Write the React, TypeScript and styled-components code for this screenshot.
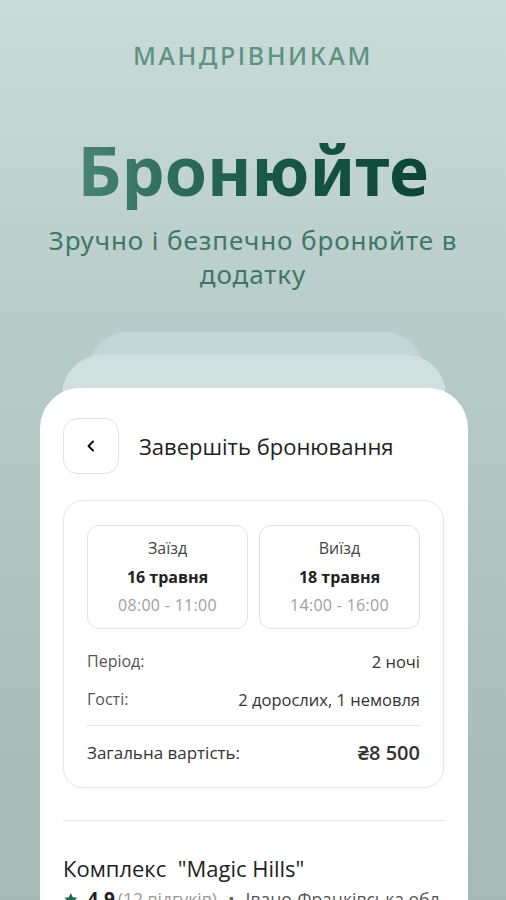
import { createGlobalStyle, styled } from "styled-components";

const Global = createGlobalStyle`
  html, body { margin: 0; padding: 0; }
  body { font-family: "Open Sans", "Noto Sans", sans-serif; }
`;

const Page = styled.div`
  width: 506px;
  height: 900px;
  overflow: hidden;
  background: linear-gradient(180deg, #c9dcd9 0%, #b4c8c6 45%, #a5b9b7 100%);
  display: flex;
  flex-direction: column;
  align-items: center;
`;

const Eyebrow = styled.div`
  margin-top: 38px;
  font-family: "Noto Sans", sans-serif;
  font-size: 25px;
  font-weight: 500;
  letter-spacing: 2.6px;
  color: #5e9383;
  line-height: 34px;
`;

const Heading = styled.h1`
  margin: 58px 0 0;
  font-family: "Noto Sans", sans-serif;
  font-size: 68px;
  font-weight: 700;
  line-height: 80px;
  background: linear-gradient(90deg, #4a8473 0%, #1a5a47 50%, #0c4536 100%);
  -webkit-background-clip: text;
  background-clip: text;
  color: transparent;
`;

const Subtitle = styled.p`
  margin: 13px 0 0;
  width: 440px;
  text-align: center;
  font-family: "Noto Sans", sans-serif;
  font-size: 26px;
  letter-spacing: 0.9px;
  line-height: 34px;
  color: #3f7868;
`;

const Stack = styled.div`
  position: relative;
  margin-top: 97px;
  width: 506px;
  flex: 1;
`;

const Layer = styled.div<{ $top: number; $left: number; $right: number; $bg: string }>`
  position: absolute;
  top: ${(p) => p.$top}px;
  left: ${(p) => p.$left}px;
  right: ${(p) => p.$right}px;
  height: 120px;
  border-radius: 40px;
  background: ${(p) => p.$bg};
`;

const Card = styled.div`
  position: relative;
  margin: 0 38px 0 40px;
  background: #ffffff;
  border-radius: 40px 40px 0 0;
  padding: 30px 24px 0 23px;
  height: 600px;
  color: #222;
`;

const Header = styled.div`
  display: flex;
  align-items: center;
  gap: 20px;
`;

const BackButton = styled.button`
  width: 56px;
  height: 56px;
  border: 1px solid #e2e2e2;
  border-radius: 14px;
  background: #fff;
  display: flex;
  align-items: center;
  justify-content: center;
  padding: 0;
`;

const Title = styled.div`
  font-size: 22px;
  color: #222;
`;

const Panel = styled.div`
  margin-top: 26px;
  border: 1px solid #e6e6e6;
  border-radius: 20px;
  padding: 24px 23px 16px 23px;
  box-shadow: 0 1px 3px rgba(0, 0, 0, 0.04);
`;

const Dates = styled.div`
  display: grid;
  grid-template-columns: 1fr 1fr;
  gap: 11px;
`;

const DateBox = styled.div`
  border: 1px solid #e2e2e2;
  border-radius: 12px;
  height: 104px;
  box-sizing: border-box;
  padding-top: 8px;
  display: flex;
  flex-direction: column;
  align-items: center;
`;

const DateLine = styled.div<{ $kind: "label" | "date" | "time" }>`
  font-size: 16px;
  line-height: 28.5px;
  font-weight: ${(p) => (p.$kind === "date" ? 700 : 400)};
  color: ${(p) => (p.$kind === "time" ? "#a0a0a0" : p.$kind === "date" ? "#222" : "#444")};
  letter-spacing: ${(p) => (p.$kind === "time" ? "0.3px" : "0")};
`;

const Row = styled.div`
  display: flex;
  justify-content: space-between;
  align-items: center;
  height: 38px;
  font-size: 16px;
  color: #555;
`;

const Value = styled.span<{ $big?: boolean }>`
  color: #333;
  font-weight: ${(p) => (p.$big ? 600 : 400)};
  font-size: ${(p) => (p.$big ? "20px" : "16.5px")};
`;

const TotalLabel = styled.span`
  color: #333;
  font-size: 17px;
  font-weight: 500;
`;

const Rows = styled.div`
  margin-top: 13px;
`;

const Divider = styled.div<{ $gap: number }>`
  height: 1px;
  background: #e4e4e4;
  margin: ${(p) => p.$gap}px 0;
`;

const PlaceName = styled.div`
  margin-top: 32px;
  font-size: 22px;
  color: #222;
  white-space: pre;
`;

const Meta = styled.div`
  margin-top: 3px;
  display: flex;
  align-items: center;
  gap: 3px;
  font-size: 17.5px;
  color: #999;
  white-space: nowrap;
`;

const Rating = styled.span`
  font-weight: 700;
  color: #222;
  font-size: 19px;
  margin-left: 6px;
`;

const Dot = styled.span`
  margin: 0 8px;
  color: #666;
`;

const Region = styled.span`
  color: #555;
`;

export default function App() {
  return (
    <Page>
      <Global />
      <Eyebrow>МАНДРІВНИКАМ</Eyebrow>
      <Heading>Бронюйте</Heading>
      <Subtitle>Зручно і безпечно бронюйте в додатку</Subtitle>
      <Stack>
        <Layer $top={-56} $left={88} $right={82} $bg="#c4d6d5" />
        <Layer $top={-33} $left={62} $right={60} $bg="#d1e0df" />
        <Card>
          <Header>
            <BackButton aria-label="Назад">
              <svg width="14" height="14" viewBox="0 0 14 14" fill="none">
                <path d="M9 2.5L4.5 7L9 11.5" stroke="#111" strokeWidth="2" strokeLinecap="round" strokeLinejoin="round" />
              </svg>
            </BackButton>
            <Title>Завершіть бронювання</Title>
          </Header>
          <Panel>
            <Dates>
              <DateBox>
                <DateLine $kind="label">Заїзд</DateLine>
                <DateLine $kind="date">16 травня</DateLine>
                <DateLine $kind="time">08:00 - 11:00</DateLine>
              </DateBox>
              <DateBox>
                <DateLine $kind="label">Виїзд</DateLine>
                <DateLine $kind="date">18 травня</DateLine>
                <DateLine $kind="time">14:00 - 16:00</DateLine>
              </DateBox>
            </Dates>
            <Rows>
              <Row>
                <span>Період:</span>
                <Value>2 ночі</Value>
              </Row>
              <Row>
                <span>Гості:</span>
                <Value>2 дорослих, 1 немовля</Value>
              </Row>
              <Divider $gap={7} />
              <Row>
                <TotalLabel>Загальна вартість:</TotalLabel>
                <Value $big>₴8 500</Value>
              </Row>
            </Rows>
          </Panel>
          <Divider $gap={32} style={{ marginBottom: 0 }} />
          <PlaceName>Комплекс  "Magic Hills"</PlaceName>
          <Meta>
            <svg width="21" height="21" viewBox="0 0 24 24">
              <path d="M12 2l3 6.5 7 .8-5.2 4.8 1.5 7L12 17.6 5.7 21.1l1.5-7L2 9.3l7-.8z" fill="#1d6b4e" />
            </svg>
            <Rating>4.9</Rating>
            <span>(12 відгуків)</span>
            <Dot>•</Dot>
            <Region>Івано-Франківська обл.</Region>
          </Meta>
        </Card>
      </Stack>
    </Page>
  );
}
